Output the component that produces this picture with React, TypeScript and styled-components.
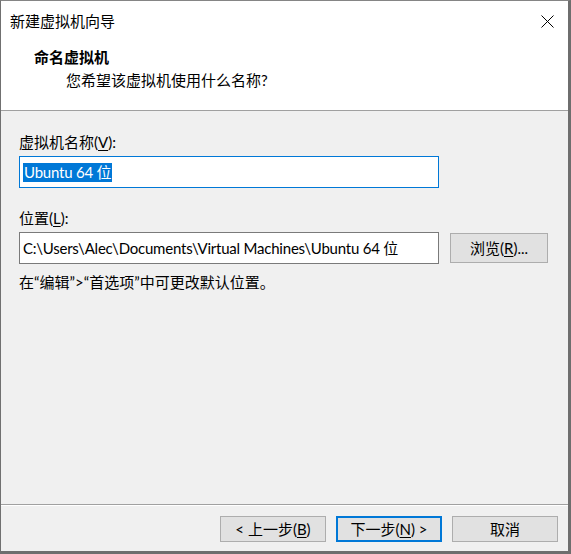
import React from "react";
import styled, { createGlobalStyle } from "styled-components";

const GlobalStyle = createGlobalStyle`
  html, body { margin: 0; padding: 0; background: #f0f0f0; }
  * { box-sizing: border-box; }
  body {
    font-family: Lato, "Noto Sans CJK SC", sans-serif;
    font-size: 15px;
    color: #000;
  }
`;

const Window = styled.div`
  width: 571px;
  height: 554px;
  display: flex;
  flex-direction: column;
  border-top: 1px solid #858585;
  border-left: 1px solid #707070;
  border-right: 3px solid #6e6e6e;
  border-bottom: 3px solid #6e6e6e;
  background: #f0f0f0;
`;

const Header = styled.div`
  background: #fff;
  height: 110px;
  border-bottom: 1px solid #a0a0a0;
  display: flex;
  flex-direction: column;
`;

const TitleBar = styled.div`
  height: 40px;
  display: flex;
  align-items: center;
  justify-content: space-between;
  padding: 0 14px 0 9px;
`;

const Title = styled.span`
  font-size: 15px;
  line-height: 20px;
`;

const CloseButton = styled.div`
  width: 14px;
  height: 14px;
  display: flex;
  align-items: center;
  justify-content: center;
`;

const Heading = styled.div`
  font-weight: bold;
  line-height: 20px;
  padding-left: 33px;
  margin-top: 6px;
`;

const SubHeading = styled.div`
  line-height: 20px;
  padding-left: 65px;
  margin-top: 3px;
`;

const Body = styled.div`
  flex: 1;
  padding: 21px 0 0 18px;
  display: flex;
  flex-direction: column;
`;

const Label = styled.div<{ $gap?: number }>`
  line-height: 20px;
  margin-top: ${(p) => p.$gap ?? 0}px;
  margin-bottom: 4px;
`;

const Key = styled.span`
  text-decoration: underline;
  text-underline-offset: 2px;
`;

const TextBox = styled.div<{ $focused?: boolean }>`
  width: 420px;
  height: 32px;
  background: #fff;
  border: 1px solid ${(p) => (p.$focused ? "#0078d7" : "#7a7a7a")};
  display: flex;
  align-items: center;
  padding-left: 3px;
  white-space: nowrap;
  overflow: hidden;
  line-height: 19px;
  letter-spacing: -0.22px;
`;

const Selected = styled.span`
  background: #0078d7;
  color: #fff;
  display: inline-block;
  height: 19px;
  line-height: 19px;
  padding: 0 1px;
`;

const Row = styled.div`
  display: flex;
  align-items: center;
  gap: 11px;
`;

const Button = styled.div<{ $default?: boolean; $w?: number }>`
  width: ${(p) => p.$w ?? 106}px;
  height: 26px;
  background: #e1e1e1;
  border: ${(p) => (p.$default ? "2px solid #0078d7" : "1px solid #adadad")};
  display: flex;
  align-items: center;
  justify-content: center;
  line-height: 20px;
  white-space: pre;
`;

const BrowseButton = styled(Button)`
  height: 30px;
`;

const Note = styled.div`
  line-height: 20px;
  margin-top: 8px;
`;

const Footer = styled.div`
  height: 47px;
  border-top: 1px solid #a0a0a0;
  box-shadow: inset 0 1px 0 #fff;
  display: flex;
  justify-content: flex-end;
  align-items: flex-start;
  gap: 10px;
  padding: 11px 10px 0 0;
`;

export default function App() {
  return (
    <>
      <GlobalStyle />
      <Window>
        <Header>
          <TitleBar>
            <Title>新建虚拟机向导</Title>
            <CloseButton>
              <svg width="13" height="13" viewBox="0 0 13 13">
                <path d="M0.5 0.5 L12.5 12.5 M12.5 0.5 L0.5 12.5" stroke="#000" strokeWidth="1" fill="none" />
              </svg>
            </CloseButton>
          </TitleBar>
          <Heading>命名虚拟机</Heading>
          <SubHeading>您希望该虚拟机使用什么名称?</SubHeading>
        </Header>
        <Body>
          <Label>
            虚拟机名称(<Key>V</Key>):
          </Label>
          <TextBox $focused>
            <Selected>Ubuntu 64 位</Selected>
          </TextBox>
          <Label $gap={20}>
            位置(<Key>L</Key>):
          </Label>
          <Row>
            <TextBox>C:\Users\Alec\Documents\Virtual Machines\Ubuntu 64 位</TextBox>
            <BrowseButton $w={98}>
              浏览(<Key>R</Key>)...
            </BrowseButton>
          </Row>
          <Note>在“编辑”&gt;“首选项”中可更改默认位置。</Note>
        </Body>
        <Footer>
          <Button>
            {"< 上一步("}
            <Key>B</Key>
            {")"}
          </Button>
          <Button $default>
            {"下一步("}
            <Key>N</Key>
            {") >"}
          </Button>
          <Button>取消</Button>
        </Footer>
      </Window>
    </>
  );
}
